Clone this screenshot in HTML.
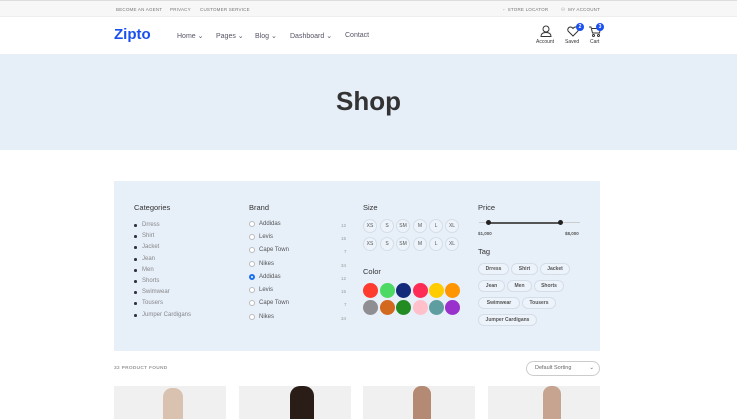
<!DOCTYPE html>
<html><head><meta charset="utf-8"><style>
*{margin:0;padding:0;box-sizing:border-box}
html,body{width:737px;height:419px;overflow:hidden}
body{background:#fff;font-family:"Liberation Sans",sans-serif;position:relative;color:#333}
.a{position:absolute}
.top{left:0;top:0;width:737px;height:17px;background:#f7f7f7;border-bottom:1px solid #eee;border-top:1px solid #ddd}
.tl{font-size:4.5px;color:#777;top:7px;letter-spacing:.2px}
.nav{font-size:7px;color:#556;top:32px}
.hero{left:0;top:54px;width:737px;height:96px;background:#e6eef8}
.box{left:114px;top:181px;width:486px;height:170px;background:#e7eff9}
.h{font-size:7.5px;color:#333}
.li{font-size:6px;color:#888}
.dot{width:2.5px;height:2.5px;border-radius:50%;background:#334}
.rad{width:6px;height:6px;border-radius:50%;border:1px solid #bbb;background:#fff}
.br{font-size:6px;color:#555}
.cnt{font-size:4.5px;color:#999}
.sz{width:14px;height:14px;border-radius:50%;border:1px solid #d6dde6;font-size:5px;color:#555;text-align:center;line-height:12px;background:#edf3fa}
.col{width:15px;height:15px;border-radius:50%}
.tag{height:12px;border:1px solid #d6dde6;border-radius:7px;font-size:5px;color:#555;line-height:10px;text-align:center;font-weight:bold;background:#edf3fa}
.card{top:386px;width:112px;height:33px;background:#f0f0f0}
.badge{width:8px;height:8px;border-radius:50%;background:#1a4ff0;color:#fff;font-size:5px;text-align:center;line-height:8px;font-weight:bold}
.ic{font-size:5px;color:#333;top:39px}
</style></head><body>
<div class="a top"></div>
<div class="a tl" style="left:116px">BECOME AN AGENT</div>
<div class="a tl" style="left:170px">PRIVACY</div>
<div class="a tl" style="left:200px">CUSTOMER SERVICE</div>
<div class="a tl" style="left:503px">◦ &nbsp;STORE LOCATOR</div>
<div class="a tl" style="left:561px">⚇ &nbsp;MY ACCOUNT</div>
<div class="a" style="left:114px;top:26px;font-size:15px;font-weight:bold;color:#1a4ff0">Zipto</div>
<div class="a nav" style="left:177px">Home ⌄</div>
<div class="a nav" style="left:216px">Pages ⌄</div>
<div class="a nav" style="left:255px">Blog ⌄</div>
<div class="a nav" style="left:290px">Dashboard ⌄</div>
<div class="a nav" style="left:345px">Contact</div>
<svg class="a" style="left:540px;top:25px" width="12" height="12" viewBox="0 0 12 12" fill="none" stroke="#333" stroke-width="1"><circle cx="6" cy="4" r="3"/><path d="M1 11.5h10c0-3-2-4-5-4s-5 1-5 4z"/></svg>
<div class="a ic" style="left:536px">Account</div>
<svg class="a" style="left:567px;top:26px" width="12" height="11" viewBox="0 0 12 11" fill="none" stroke="#333" stroke-width="1"><path d="M6 10L1.5 5.5C0 4 1 1 3.5 1 5 1 6 2.5 6 2.5S7 1 8.5 1C11 1 12 4 10.5 5.5z"/></svg>
<div class="a ic" style="left:565px">Saved</div>
<svg class="a" style="left:589px;top:26px" width="12" height="11" viewBox="0 0 12 11" fill="none" stroke="#333" stroke-width="1"><path d="M0 1h2l1.5 6h7l1-4.5H3"/><circle cx="4.5" cy="9.5" r="1"/><circle cx="9.5" cy="9.5" r="1"/></svg>
<div class="a ic" style="left:590px">Cart</div>
<div class="a badge" style="left:576px;top:23px">2</div>
<div class="a badge" style="left:596px;top:23px">3</div>
<div class="a hero"></div>
<div class="a" style="left:0;top:86px;width:737px;text-align:center;font-size:26px;font-weight:bold;color:#333">Shop</div>
<div class="a box"></div>
<div class="a h" style="left:134px;top:203px">Categories</div>
<div class="a h" style="left:249px;top:203px">Brand</div>
<div class="a h" style="left:363px;top:203px">Size</div>
<div class="a h" style="left:478px;top:203px">Price</div>
<div class="a h" style="left:363px;top:267px">Color</div>
<div class="a h" style="left:478px;top:247px">Tag</div>

<div class="a dot" style="left:134px;top:224px"></div><div class="a li" style="left:142px;top:222px">Drress</div>
<div class="a dot" style="left:134px;top:235px"></div><div class="a li" style="left:142px;top:233px">Shirt</div>
<div class="a dot" style="left:134px;top:246px"></div><div class="a li" style="left:142px;top:244px">Jacket</div>
<div class="a dot" style="left:134px;top:258px"></div><div class="a li" style="left:142px;top:256px">Jean</div>
<div class="a dot" style="left:134px;top:269px"></div><div class="a li" style="left:142px;top:267px">Men</div>
<div class="a dot" style="left:134px;top:280px"></div><div class="a li" style="left:142px;top:278px">Shorts</div>
<div class="a dot" style="left:134px;top:291px"></div><div class="a li" style="left:142px;top:289px">Swimwear</div>
<div class="a dot" style="left:134px;top:302px"></div><div class="a li" style="left:142px;top:300px">Tousers</div>
<div class="a dot" style="left:134px;top:314px"></div><div class="a li" style="left:142px;top:312px">Jumper Cardigans</div>

<div class="a rad" style="left:249px;top:221px"></div><div class="a br" style="left:259px;top:221px">Addidas</div><div class="a cnt" style="left:341px;top:223px">12</div>
<div class="a rad" style="left:249px;top:234px"></div><div class="a br" style="left:259px;top:234px">Levis</div><div class="a cnt" style="left:341px;top:236px">15</div>
<div class="a rad" style="left:249px;top:247px"></div><div class="a br" style="left:259px;top:247px">Cape Town</div><div class="a cnt" style="left:344px;top:249px">7</div>
<div class="a rad" style="left:249px;top:261px"></div><div class="a br" style="left:259px;top:261px">Nikes</div><div class="a cnt" style="left:341px;top:263px">34</div>
<div class="a rad" style="left:249px;top:274px;border:2px solid #1a6ff0"></div><div class="a br" style="left:259px;top:274px">Addidas</div><div class="a cnt" style="left:341px;top:276px">12</div>
<div class="a rad" style="left:249px;top:287px"></div><div class="a br" style="left:259px;top:287px">Levis</div><div class="a cnt" style="left:341px;top:289px">15</div>
<div class="a rad" style="left:249px;top:300px"></div><div class="a br" style="left:259px;top:300px">Cape Town</div><div class="a cnt" style="left:344px;top:302px">7</div>
<div class="a rad" style="left:249px;top:314px"></div><div class="a br" style="left:259px;top:314px">Nikes</div><div class="a cnt" style="left:341px;top:316px">34</div>

<div class="a sz" style="left:363px;top:219px">XS</div><div class="a sz" style="left:380px;top:219px">S</div><div class="a sz" style="left:396px;top:219px">SM</div><div class="a sz" style="left:413px;top:219px">M</div><div class="a sz" style="left:429px;top:219px">L</div><div class="a sz" style="left:445px;top:219px">XL</div>
<div class="a sz" style="left:363px;top:237px">XS</div><div class="a sz" style="left:380px;top:237px">S</div><div class="a sz" style="left:396px;top:237px">SM</div><div class="a sz" style="left:413px;top:237px">M</div><div class="a sz" style="left:429px;top:237px">L</div><div class="a sz" style="left:445px;top:237px">XL</div>

<div class="a col" style="left:363px;top:283px;background:#ff3b30"></div><div class="a col" style="left:380px;top:283px;background:#4cd964"></div><div class="a col" style="left:396px;top:283px;background:#142a7a"></div><div class="a col" style="left:413px;top:283px;background:#ff2d55"></div><div class="a col" style="left:429px;top:283px;background:#ffcc00"></div><div class="a col" style="left:445px;top:283px;background:#ff9500"></div>
<div class="a col" style="left:363px;top:300px;background:#8e8e93"></div><div class="a col" style="left:380px;top:300px;background:#d2691e"></div><div class="a col" style="left:396px;top:300px;background:#228b22"></div><div class="a col" style="left:413px;top:300px;background:#ffc0cb"></div><div class="a col" style="left:429px;top:300px;background:#5f9ea0"></div><div class="a col" style="left:445px;top:300px;background:#9932cc"></div>

<div class="a" style="left:479px;top:222px;width:101px;height:1px;background:#ccc"></div>
<div class="a" style="left:488px;top:222px;width:73px;height:1.5px;background:#555"></div>
<div class="a" style="left:486px;top:220px;width:5px;height:5px;border-radius:50%;background:#222"></div>
<div class="a" style="left:558px;top:220px;width:5px;height:5px;border-radius:50%;background:#222"></div>
<div class="a cnt" style="left:478px;top:231px;color:#555;font-weight:bold">$1,000</div>
<div class="a cnt" style="left:565px;top:231px;color:#555;font-weight:bold">$8,000</div>

<div class="a tag" style="left:478px;top:263px;width:31px">Drress</div><div class="a tag" style="left:511px;top:263px;width:27px">Shirt</div><div class="a tag" style="left:540px;top:263px;width:30px">Jacket</div>
<div class="a tag" style="left:478px;top:280px;width:27px">Jean</div><div class="a tag" style="left:507px;top:280px;width:25px">Men</div><div class="a tag" style="left:534px;top:280px;width:30px">Shorts</div>
<div class="a tag" style="left:478px;top:297px;width:42px">Swimwear</div><div class="a tag" style="left:522px;top:297px;width:34px">Tousers</div>
<div class="a tag" style="left:478px;top:314px;width:59px">Jumper Cardigans</div>

<div class="a" style="left:114px;top:366px;font-size:4.8px;color:#999;font-weight:bold;letter-spacing:.3px">32 PRODUCT FOUND</div>
<div class="a" style="left:526px;top:361px;width:74px;height:15px;border:1px solid #ccc;border-radius:8px;font-size:5.5px;color:#666;line-height:13px;padding-left:8px">Default Sorting<span style="position:absolute;right:5px">⌄</span></div>
<div class="a card" style="left:114px"></div>
<div class="a card" style="left:239px"></div>
<div class="a card" style="left:363px"></div>
<div class="a card" style="left:488px"></div>
<div class="a" style="left:163px;top:388px;width:20px;height:31px;border-radius:9px 9px 0 0;background:#d9c2b0"></div>
<div class="a" style="left:290px;top:386px;width:24px;height:33px;border-radius:10px 10px 0 0;background:#2a1d18"></div>
<div class="a" style="left:413px;top:386px;width:18px;height:33px;border-radius:8px 8px 0 0;background:#b58a74"></div>
<div class="a" style="left:543px;top:386px;width:18px;height:33px;border-radius:8px 8px 0 0;background:#c7a490"></div>
</body></html>
